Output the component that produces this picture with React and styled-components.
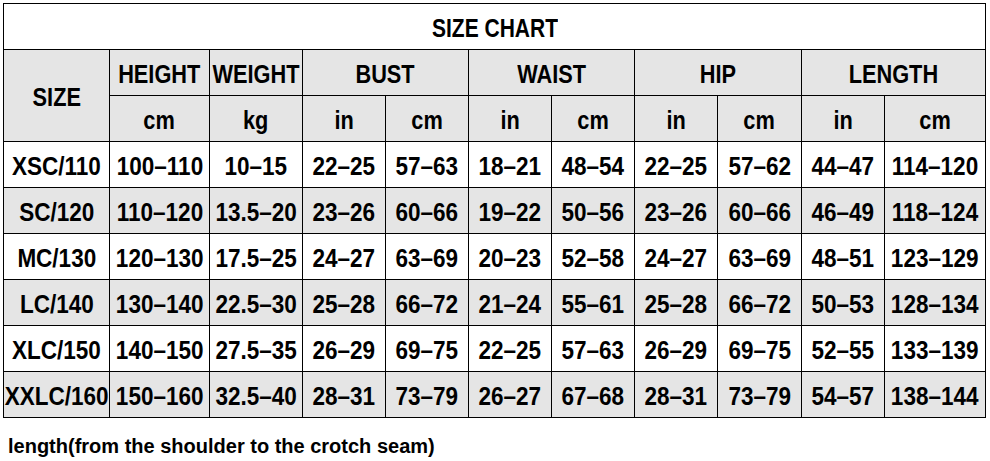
import React from "react";
import styled, { createGlobalStyle } from "styled-components";

const GlobalStyle = createGlobalStyle`
  html, body {
    margin: 0;
    padding: 0;
    background: #fff;
  }
`

const Page = styled.div`
  width: 990px;
  height: 461px;
  padding: 3px 0 0 3px;
  box-sizing: border-box;
  font-family: "Liberation Sans", Arial, sans-serif;
  color: #000;
`
const Table = styled.table`
  border-collapse: collapse;
  table-layout: fixed;
  width: 983px;
`
const Row = styled.tr`
  height: 46px;
  background: ${props => props.$shade ? "#e5e5e5" : "#fff"};
`
const Cell = styled.td`
  border: 1.5px solid #000;
  padding: 3px 0 0;
  vertical-align: middle;
  font-size: 25px;
  font-weight: 700;
  white-space: nowrap;
`
// condensed look: the reference uses a narrow face
const Fit = styled.div`
  display: flex;
  justify-content: center;
  width: 100%;
`
const Label = styled.span`
  display: inline-block;
  flex-shrink: 0;
  transform: scaleX(${props => props.$sx || 0.87});
  transform-origin: center;
`
const Note = styled.p`
  margin: 17px 0 0 5px;
  font-weight: 700;
  font-size: 20px;
`

const widths = [106, 100, 93, 83, 83, 83, 83, 83, 84, 83, 101]

const rows = [
  ["XSC/110", "100–110", "10–15", "22–25", "57–63", "18–21", "48–54", "22–25", "57–62", "44–47", "114–120"],
  ["SC/120", "110–120", "13.5–20", "23–26", "60–66", "19–22", "50–56", "23–26", "60–66", "46–49", "118–124"],
  ["MC/130", "120–130", "17.5–25", "24–27", "63–69", "20–23", "52–58", "24–27", "63–69", "48–51", "123–129"],
  ["LC/140", "130–140", "22.5–30", "25–28", "66–72", "21–24", "55–61", "25–28", "66–72", "50–53", "128–134"],
  ["XLC/150", "140–150", "27.5–35", "26–29", "69–75", "22–25", "57–63", "26–29", "69–75", "52–55", "133–139"],
  ["XXLC/160", "150–160", "32.5–40", "28–31", "73–79", "26–27", "67–68", "28–31", "73–79", "54–57", "138–144"],
]

const C = ({ children, sx, ...rest }) => (
  <Cell {...rest}>
    <Fit><Label $sx={sx}>{children}</Label></Fit>
  </Cell>
)

const App = () => {
  return (
    <Page>
      <GlobalStyle />
      <Table>
        <colgroup>
          {widths.map((w, i) => <col key={i} style={{ width: w }} />)}
        </colgroup>
        <tbody>
          <Row>
            <C colSpan={11} sx={0.84}>SIZE CHART</C>
          </Row>
          <Row $shade>
            <C rowSpan={2}>SIZE</C>
            <C>HEIGHT</C>
            <C>WEIGHT</C>
            <C colSpan={2}>BUST</C>
            <C colSpan={2}>WAIST</C>
            <C colSpan={2}>HIP</C>
            <C colSpan={2}>LENGTH</C>
          </Row>
          <Row $shade>
            <C>cm</C>
            <C>kg</C>
            <C>in</C>
            <C>cm</C>
            <C>in</C>
            <C>cm</C>
            <C>in</C>
            <C>cm</C>
            <C>in</C>
            <C>cm</C>
          </Row>
          {rows.map((r, i) => (
            <Row key={r[0]} $shade={i % 2 === 1}>
              {r.map((v, j) => <C key={j} sx={0.9}>{v}</C>)}
            </Row>
          ))}
        </tbody>
      </Table>
      <Note>length(from the shoulder to the crotch seam)</Note>
    </Page>
  )
}

export default App
